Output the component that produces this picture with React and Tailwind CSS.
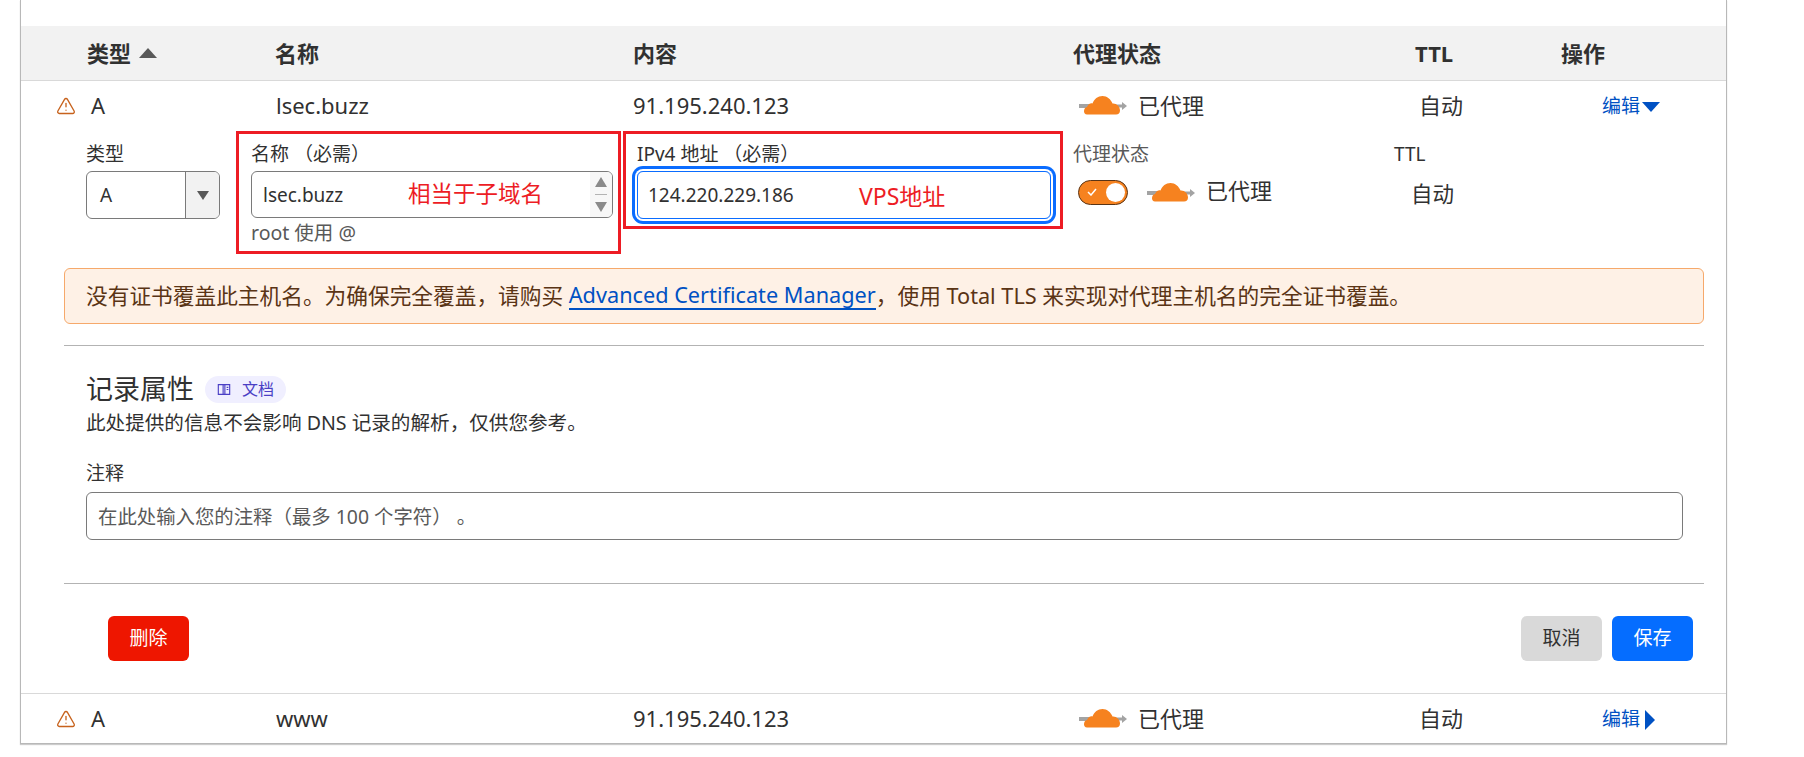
import React from "react";
import { TriangleAlert } from "lucide-react";

const Cloud = ({ className }) => (
  <svg viewBox="0 0 48 19" className={className} aria-hidden="true">
    <rect x="0" y="8" width="14" height="4" fill="#a3a3a3" />
    <rect x="34" y="8.5" width="10" height="3" fill="#a3a3a3" />
    <path d="M43 6l5 4-5 4z" fill="#a3a3a3" />
    <path
      d="M8 18.6C4 18.6 4 12 8 11 9.500 7.500 12 7 13.500 7.500 15 3 19 0 23.500 0 28 0 32 3.500 33.500 7.500 37 7 41 10 41 14.500 41 17 39.500 18.600 37 18.600Z"
      fill="#f6821f"
    />
  </svg>
);

const Warning = () => (
  <TriangleAlert size={20} strokeWidth={1.6} className="text-[#c7621c]" />
);

const Row = ({ name, open }) => (
  <div className="grid grid-cols-[66px_188px_358px_440px_342px_146px_1fr] items-center h-[49px] text-[22px] text-[#313131]">
    <div className="pl-[35px] pt-[1px]">
      <Warning />
    </div>
    <div className="pl-[4px]">A</div>
    <div className="pl-[1px]">{name}</div>
    <div>91.195.240.123</div>
    <div className="flex items-center pl-[6px] gap-[11px]">
      <Cloud className="w-[48px] h-[19px]" />
      <span>已代理</span>
    </div>
    <div className="pl-[4px]">自动</div>
    <div className="flex items-center pl-[41px] pt-[2px] whitespace-nowrap text-[19px] text-[#0051c3]">
      编辑
      {open ? (
        <svg viewBox="0 0 18 10" className="w-[18px] h-[10px] ml-[2px]">
          <path d="M0 0h18l-9 10z" fill="#0051c3" />
        </svg>
      ) : (
        <svg viewBox="0 0 10 20" className="w-[10px] h-[20px] ml-[5px]">
          <path d="M0 0l10 10-10 10z" fill="#0051c3" />
        </svg>
      )}
    </div>
  </div>
);

const Label = ({ children, className = "" }) => (
  <div className={`text-[19px] leading-[24px] text-[#313131] ${className}`}>{children}</div>
);

export default function App() {
  return (
    <div className="w-[1804px] h-[757px] overflow-hidden bg-white [font-family:'Noto_Sans','Noto_Sans_CJK_SC',sans-serif]">
      <div className="relative ml-[20px] w-[1707px] h-[744px] pt-[26px] border-x border-b border-[#b8b8b8] shadow-[0_1px_1px_rgba(0,0,0,0.2)]">
        {/* table head */}
        <div className="grid grid-cols-[66px_188px_358px_440px_342px_146px_1fr] items-center h-[55px] bg-[#f2f2f2] border-b border-[#d9d9d9] text-[22px] font-bold text-[#313131]">
          <div />
          <div className="flex items-center gap-[8px]">
            类型
            <svg viewBox="0 0 18 10" className="w-[18px] h-[10px]">
              <path d="M0 10h18L9 0z" fill="#595959" />
            </svg>
          </div>
          <div>名称</div>
          <div>内容</div>
          <div>代理状态</div>
          <div>TTL</div>
          <div>操作</div>
        </div>

        <Row name="lsec.buzz" open />

        {/* edit form */}
        <div className="relative">
          <div className="grid grid-cols-[165px_386px_436px_321px_auto] pl-[65px] pt-[12px] h-[138px]">
            <div>
              <Label>类型</Label>
              <div className="flex mt-[5px] w-[134px] h-[48px] border border-[#7a7a7a] rounded-[6px] overflow-hidden text-[19px] text-[#313131]">
                <div className="flex-1 flex items-center pl-[13px]">A</div>
                <div className="w-[34px] bg-[#f2f2f2] border-l border-[#7a7a7a] flex items-center justify-center">
                  <svg viewBox="0 0 12 9" className="w-[12px] h-[9px]">
                    <path d="M0 0h12L6 9z" fill="#595959" />
                  </svg>
                </div>
              </div>
            </div>
            <div>
              <Label>名称 （必需）</Label>
              <div className="flex mt-[5px] w-[362px] h-[47px] border border-[#7a7a7a] rounded-[6px] overflow-hidden text-[19px] text-[#313131]">
                <div className="flex-1 flex items-center pl-[11px] pt-[2px]">lsec.buzz</div>
                <div className="w-[22px] bg-[#f7f7f7] flex flex-col items-center justify-center gap-[7px]">
                  <svg viewBox="0 0 12 10" className="w-[12px] h-[10px]">
                    <path d="M0 10h12L6 0z" fill="#8a8a8a" />
                  </svg>
                  <div className="w-[12px] h-px bg-[#b3b3b3]" />
                  <svg viewBox="0 0 12 10" className="w-[12px] h-[10px]">
                    <path d="M0 0h12L6 10z" fill="#8a8a8a" />
                  </svg>
                </div>
              </div>
              <div className="mt-[2px] text-[19.500px] leading-[26px] text-[#595959]">root 使用 @</div>
            </div>
            <div>
              <Label>IPv4 地址 （必需）</Label>
              <div className="flex items-center mt-[5px] w-[414px] h-[48px] pl-[10px] pt-[1px] border border-[#0a6cff] rounded-[6px] shadow-[0_0_0_2px_#fff,0_0_0_5px_#0a6cff] text-[19px] text-[#313131]">
                124.220.229.186
              </div>
            </div>
            <div>
              <Label className="text-[#595959]">代理状态</Label>
              <div className="flex items-center mt-[2px] h-[48px] pl-[5px]">
                <div className="flex items-center justify-between w-[50px] h-[25px] px-[2px] rounded-full bg-[#f6821f] border border-[#5a3415]">
                  <svg viewBox="0 0 10 8" className="w-[10px] h-[8px] ml-[6px]">
                    <path d="M1 4l3 3 5-6" fill="none" stroke="#fff" strokeWidth="1.500" />
                  </svg>
                  <div className="w-[19px] h-[19px] rounded-full bg-white" />
                </div>
                <Cloud className="w-[48px] h-[19px] ml-[19px]" />
                <span className="ml-[11px] pb-[4px] text-[22px] text-[#313131]">已代理</span>
              </div>
            </div>
            <div>
              <Label>TTL</Label>
              <div className="mt-[12px] pl-[17px] text-[21.500px] text-[#313131]">自动</div>
            </div>
          </div>

          {/* red annotations drawn on top of the screenshot */}
          <div className="absolute left-[215px] top-[1px] w-[385px] h-[123px] border-[3px] border-[#ed1c24]" />
          <div className="absolute left-[602px] top-[1px] w-[440px] h-[98px] border-[3px] border-[#ed1c24]" />
          <div className="absolute left-[387px] top-[49px] text-[22.500px] leading-[30px] text-[#ed1c24]">相当于子域名</div>
          <div className="absolute left-[838px] top-[51px] text-[23px] leading-[30px] text-[#ed1c24]">VPS地址</div>
        </div>

        {/* certificate warning */}
        <div className="ml-[43px] mr-[22px] h-[56px] flex items-center pl-[21px] bg-[#fef1e6] border border-[#f6a96b] rounded-[6px] text-[21.700px] text-[#5a3415] whitespace-nowrap">
          没有证书覆盖此主机名。为确保完全覆盖，请购买&nbsp;
          <span className="text-[#0051c3] border-b-2 border-[#0051c3] leading-[26px]">Advanced Certificate Manager</span>
          ，使用 Total TLS 来实现对代理主机名的完全证书覆盖。
        </div>

        <div className="ml-[43px] mr-[22px] mt-[21px] h-px bg-[#b3b3b3]" />

        {/* record attributes */}
        <div className="pl-[65px]">
          <div className="flex items-center mt-[29px] h-[28px]">
            <span className="text-[27px] text-[#313131]">记录属性</span>
            <span className="flex items-center ml-[11px] h-[27px] w-[81px] pl-[12px] rounded-full bg-[#f0efff] text-[16px] text-[#4a3fc5]">
              <svg viewBox="0 0 16 14" className="w-[14px] h-[13px]" fill="none" stroke="#4a3fc5" strokeWidth="1.300">
                <path d="M1.500 1.500h5.500v11H1.500zM9 1.500h5.500v11H9zM7 1.500h2M7 12.500h2M11 4.500h2M11 7h2" />
              </svg>
              <span className="ml-[11px]">文档</span>
            </span>
          </div>
          <div className="mt-[7px] text-[19.600px] leading-[26px] text-[#313131]">
            此处提供的信息不会影响 DNS 记录的解析，仅供您参考。
          </div>
          <Label className="mt-[25px]">注释</Label>
          <div className="mt-[7px] flex items-center w-[1597px] h-[48px] pl-[11px] pt-[1px] border border-[#7a7a7a] rounded-[6px] text-[19.400px] text-[#595959]">
            在此处输入您的注释（最多 100 个字符）&nbsp;。
          </div>
        </div>

        <div className="ml-[43px] mr-[22px] mt-[43px] h-px bg-[#b3b3b3]" />

        {/* form actions */}
        <div className="flex justify-between items-center h-[110px] pl-[87px] pr-[33px] text-[19px] border-b border-[#d9d9d9]">
          <button className="w-[81px] h-[45px] rounded-[6px] bg-[#ee1600] text-white">删除</button>
          <div className="flex gap-[10px]">
            <button className="w-[81px] h-[45px] rounded-[6px] bg-[#d9d9d9] text-[#313131]">取消</button>
            <button className="w-[81px] h-[45px] rounded-[6px] bg-[#056dff] text-white">保存</button>
          </div>
        </div>

        <Row name="www" />
      </div>
    </div>
  );
}
